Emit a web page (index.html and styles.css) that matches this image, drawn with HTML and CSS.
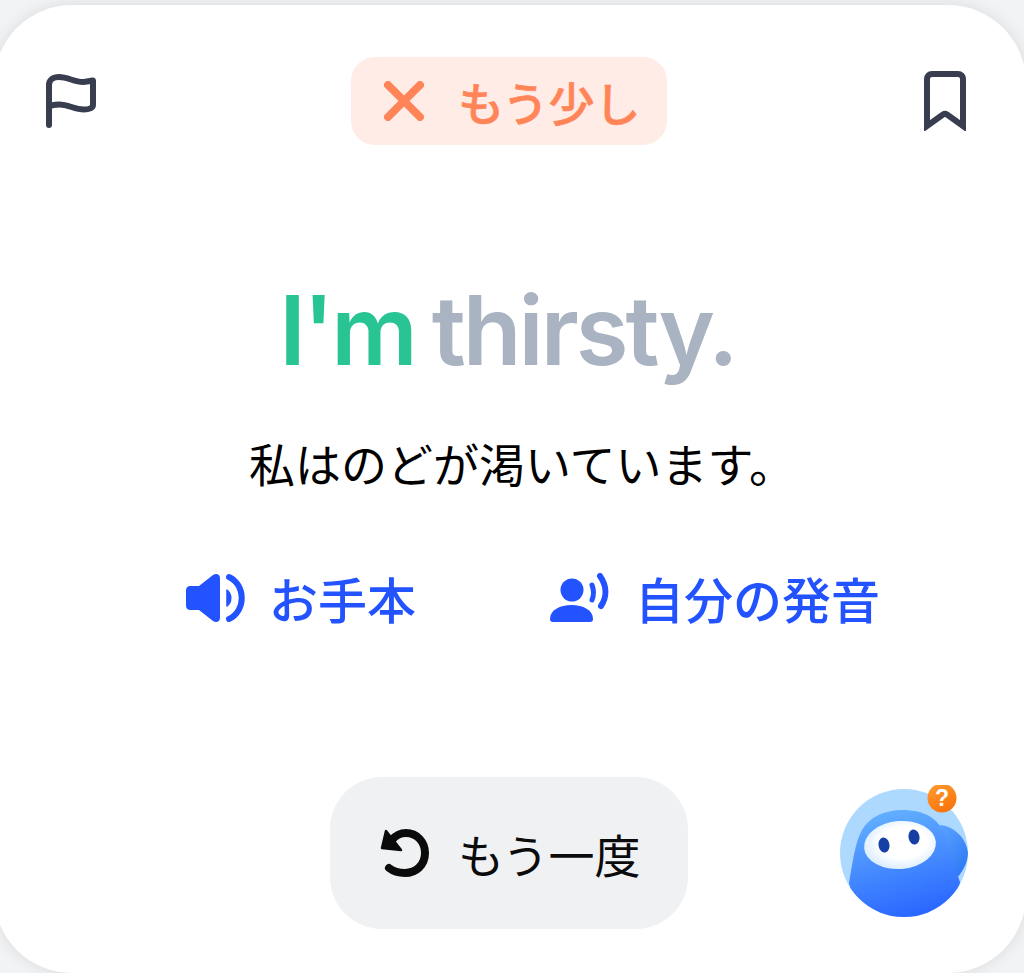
FILE: index.html
```html
<!DOCTYPE html>
<html lang="ja">
<head>
  <meta charset="utf-8">
  <title>Speaking Card</title>
  <link rel="stylesheet" href="styles.css">
</head>
<body>
  <div class="card">
    <!-- Top bar -->
    <div class="top-bar">
      <svg class="flag-icon" viewBox="0 0 50 54" width="50" height="54">
        <path d="M3 51V11C3 6 7 3 13 3C22 3 28 8 37 8C40 8 43 7 47 6.500V31C47 34 43 35.500 38 35.500C28 35.500 23 30.500 13 30.500C9 30.500 5 31 3 33" fill="none" stroke="#383e4f" stroke-width="6" stroke-linecap="round" stroke-linejoin="round"/>
      </svg>
      <div class="result-pill">
        <svg viewBox="0 0 40 40" width="40" height="40">
          <path d="M4 4L36 36M36 4L4 36" fill="none" stroke="#ff8559" stroke-width="8" stroke-linecap="round"/>
        </svg>
        <span>もう少し</span>
      </div>
      <svg class="bookmark-icon" viewBox="0 0 42 60" width="42" height="60">
        <path d="M3 55V8C3 5 5 3 8 3H34C37 3 39 5 39 8V55L23 43.500C21.500 42.500 20.500 42.500 19 43.500Z" fill="none" stroke="#383e4f" stroke-width="6" stroke-linejoin="miter"/>
      </svg>
    </div>

    <!-- Sentence -->
    <h1 class="sentence">
      <span class="said">I'm</span>
      <span class="unsaid">thirsty.</span>
    </h1>
    <p class="translation">私はのどが渇いています。</p>

    <!-- Audio links -->
    <div class="audio-row">
      <a class="audio-link">
        <svg viewBox="0 0 60 50" width="60" height="50">
          <path d="M0 18C0 14 2 13 5 13H13L27 2C30 0 34 1 34 5V45C34 49 30 50 27 48L13 37H5C2 37 0 36 0 32Z" fill="#2253ff"/>
          <path d="M41 17C46 21 46 29 41 33Z" fill="#2253ff" stroke="#2253ff" stroke-width="1.500" stroke-linejoin="round"/>
          <path d="M43 4C60 12 60 38 43 46" fill="none" stroke="#2253ff" stroke-width="6" stroke-linecap="round"/>
        </svg>
        <span>お手本</span>
      </a>
      <a class="audio-link">
        <svg viewBox="0 0 62 50" width="62" height="50">
          <circle cx="22" cy="17" r="11.500" fill="#2253ff"/>
          <path d="M0 46C0 37 10 32 21.500 32C33 32 43 37 43 46C43 48 42 49 40 49H3C1 49 0 48 0 46Z" fill="#2253ff"/>
          <path d="M42 12C44 17 44 22 42 27" fill="none" stroke="#2253ff" stroke-width="5" stroke-linecap="round"/>
          <path d="M50 3C57 13 57 24 51 33" fill="none" stroke="#2253ff" stroke-width="6" stroke-linecap="round"/>
        </svg>
        <span>自分の発音</span>
      </a>
    </div>

    <!-- Retry -->
    <button class="retry-button" type="button">
      <svg viewBox="0 0 50 50" width="50" height="50">
        <path d="M12 12C16 7 20 5 26 5C37 5 45 14 45 25C45 37 36 45 25 45C19 45 14 44 9 40" fill="none" stroke="#0b0b0b" stroke-width="8" stroke-linecap="round"/>
        <path d="M6 3L2 20L21 22Z" fill="#0b0b0b" stroke="#0b0b0b" stroke-width="2.500" stroke-linejoin="round"/>
      </svg>
      <span>もう一度</span>
    </button>

    <!-- Helper mascot -->
    <svg class="mascot" viewBox="0 0 132 132" width="132" height="132">
      <defs>
        <linearGradient id="bodyGrad" x1="0.35" y1="0" x2="0.6" y2="1">
          <stop offset="0" stop-color="#62b0ff"/>
          <stop offset="1" stop-color="#2560ff"/>
        </linearGradient>
        <linearGradient id="armGrad" x1="0" y1="0" x2="0.6" y2="1">
          <stop offset="0" stop-color="#5da4ff"/>
          <stop offset="1" stop-color="#2f7bf6"/>
        </linearGradient>
        <linearGradient id="badgeGrad" x1="0.2" y1="0" x2="0.7" y2="1">
          <stop offset="0" stop-color="#ff9a2e"/>
          <stop offset="1" stop-color="#f9720a"/>
        </linearGradient>
        <radialGradient id="faceGrad" cx="0.55" cy="0.45" r="0.6">
          <stop offset="0.55" stop-color="#ffffff"/>
          <stop offset="1" stop-color="#d5eaff"/>
        </radialGradient>
        <clipPath id="headClip">
          <circle cx="64" cy="68" r="64"/>
        </clipPath>
      </defs>
      <circle cx="64" cy="68" r="64" fill="#aed9ff"/>
      <g clip-path="url(#headClip)">
        <path d="M100 40C113 41 126 52 128 68C128 76 124 84 118 92L104 66Z" fill="url(#armGrad)"/>
        <path d="M9 98C13 75 15 58 22 45C30 31 46 25 62 25C84 25 101 33 106 55C109 69 115 83 120 97C118 125 90 140 64 140C36 140 14 125 9 98Z" fill="url(#bodyGrad)"/>
      </g>
      <ellipse cx="60" cy="60" rx="36" ry="24" transform="rotate(-5 60 60)" fill="url(#faceGrad)"/>
      <ellipse cx="44" cy="60" rx="5.500" ry="7.500" transform="rotate(-10 44 60)" fill="#153fa5"/>
      <ellipse cx="74" cy="52" rx="5.500" ry="7.500" transform="rotate(-10 74 52)" fill="#153fa5"/>
      <circle cx="102" cy="13" r="14.500" fill="url(#badgeGrad)"/>
      <text class="badge-mark" x="102" y="21" text-anchor="middle">?</text>
    </svg>
  </div>
</body>
</html>
```

FILE: styles.css
```css
html, body {
  margin: 0;
  height: 100%;
}
body {
  background-color: #f2f3f5;
  font-family: "Noto Sans CJK JP", sans-serif;
  overflow: hidden;
}
/* the card runs a little past the window on both sides */
.card {
  position: relative;
  box-sizing: border-box;
  width: 1032px;
  height: 968px;
  margin: 5px 0 0 -6px;
  padding: 52px 2px 0 6px;
  background-color: #fff;
  border-radius: 78px;
  box-shadow: 0 0 16px rgba(0, 0, 0, 0.1);
}
.top-bar {
  display: grid;
  grid-template-columns: 1fr auto 1fr;
  align-items: center;
  padding: 0 52px 0 46px;
}
.flag-icon {
  justify-self: start;
}
.bookmark-icon {
  justify-self: end;
  margin-right: 6px;
}
.result-pill {
  display: flex;
  align-items: center;
  gap: 34px;
  box-sizing: border-box;
  width: 316px;
  height: 88px;
  padding-left: 33px;
  background-color: #ffece6;
  border-radius: 24px;
  color: #ff8559;
  font-size: 46px;
  font-weight: 500;
  -webkit-text-stroke: 0.6px #ff8559;
}
.sentence {
  display: flex;
  justify-content: center;
  gap: 17px;
  margin: 127px 9px 0 0;
  font-family: Inter, sans-serif;
  font-size: 96px;
  font-weight: 600;
  line-height: 116px;
  letter-spacing: -3px;
}
.said {
  color: #28c494;
}
.unsaid {
  color: #a9b3c1;
}
.translation {
  margin: 39px 0 0;
  padding-left: 20px;
  color: #000;
  font-size: 46px;
  line-height: 70px;
  text-align: center;
}
.audio-row {
  display: flex;
  gap: 134px;
  margin-top: 66px;
  padding-left: 186px;
}
.audio-link {
  display: flex;
  align-items: center;
  gap: 23px;
  color: #2253ff;
  font-size: 49px;
  font-weight: 500;
  line-height: 70px;
}
.retry-button {
  display: flex;
  align-items: center;
  gap: 28px;
  box-sizing: border-box;
  width: 358px;
  height: 152px;
  margin: 144px 0 0 330px;
  padding: 0 0 0 50px;
  border: none;
  background-color: #f0f1f3;
  border-radius: 52px;
  color: #0b0b0b;
  font-family: inherit;
  font-size: 46px;
}
.retry-button svg {
  flex: none;
}
.mascot {
  position: absolute;
  left: 846px;
  top: 780px;
}
.badge-mark {
  fill: #fff;
  font-family: "Liberation Sans", sans-serif;
  font-size: 23px;
  font-weight: 700;
}
```
